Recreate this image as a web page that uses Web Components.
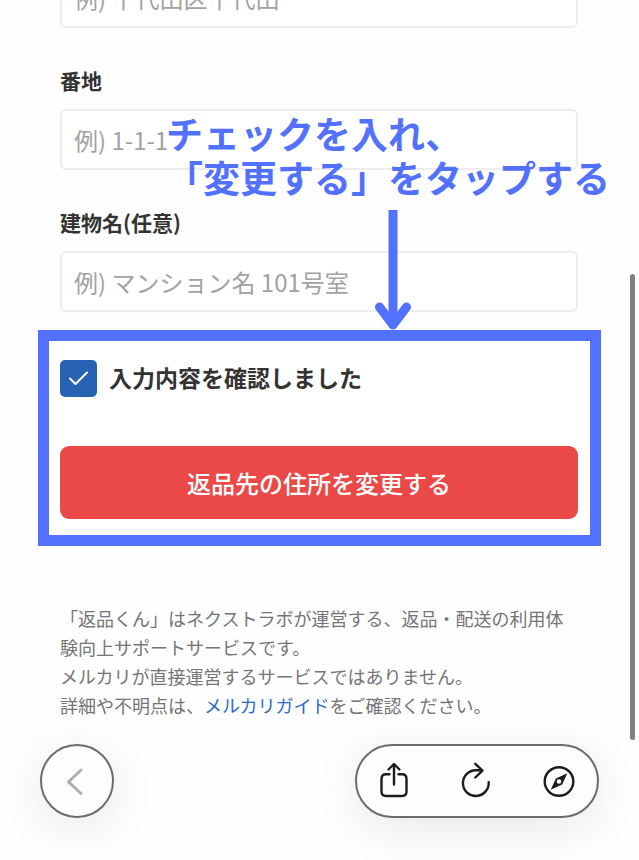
<!DOCTYPE html>
<html lang="ja">
<head>
<meta charset="utf-8">
<meta name="viewport" content="width=device-width, initial-scale=1">
<title>返品先の住所を変更</title>
<style>
  html, body { margin: 0; height: 100%; overflow: hidden; }
  body {
    background: #fefefe;
    color: #333;
    font-family: "Noto Sans CJK JP", "Noto Sans", sans-serif;
  }
</style>
</head>
<body>
<address-page></address-page>

<script>
const define = (name, html, setup) => {
  const template = document.createElement('template');
  template.innerHTML = html;
  customElements.define(name, class extends HTMLElement {
    constructor() {
      super();
      this.attachShadow({ mode: 'open' }).append(template.content.cloneNode(true));
    }
    connectedCallback() { if (setup) setup(this, this.shadowRoot); }
  });
};

define('form-field', `
  <style>
    :host { display: flex; flex-direction: column; gap: 15px; }
    label { font-size: 21px; line-height: 28px; font-weight: 700; }
    input {
      box-sizing: border-box; width: 100%; height: 61px; margin: 0; padding: 0 12px;
      border: 2px solid #ededed; border-radius: 6px; background: #fff; outline: none;
      font: inherit; font-size: 24px; color: #333;
    }
    input::placeholder { color: #a2a2a2; opacity: 1; }
  </style>
  <label for="field"><slot></slot></label>
  <input id="field" type="text">`,
  (host, root) => { root.querySelector('input').placeholder = host.getAttribute('placeholder'); });

define('confirm-check', `
  <style>
    :host { display: block; }
    label { display: flex; align-items: flex-start; gap: 12px; font-size: 23px; line-height: 34px; font-weight: 700; }
    .box { display: grid; flex: none; }
    .box > * { grid-area: 1 / 1; }
    input { appearance: none; width: 37px; height: 37px; margin: 0; border: 2px solid #ccc; border-radius: 5px; background: #fff; }
    input:checked { border-color: #2862b3; background: #2862b3; }
    svg { width: 37px; height: 37px; pointer-events: none; visibility: hidden; }
    input:checked + svg { visibility: visible; }
  </style>
  <label for="check">
    <span class="box">
      <input id="check" type="checkbox" checked>
      <svg viewBox="0 0 37 37" fill="none" stroke="#fff" stroke-width="2" stroke-linecap="round" stroke-linejoin="round" aria-hidden="true">
        <path d="M10 18.5 15.5 24 27 12.5"/>
      </svg>
    </span>
    <slot></slot>
  </label>`);

define('primary-button', `
  <style>
    :host { display: block; }
    button {
      display: block; width: 100%; height: 73px; margin: 0; padding: 0;
      border: 0; border-radius: 9px; background: #eb4948; color: #fff;
      font: inherit; font-size: 24px; font-weight: 500;
    }
  </style>
  <button type="button"><slot></slot></button>`);

define('highlight-frame', `
  <style>
    :host {
      display: flex; flex-direction: column; gap: 49px;
      border: 11px solid #5271ff; padding: 19px 12px 16px 11px; background: #fff;
    }
  </style>
  <slot></slot>`);

define('service-note', `
  <style>
    :host { display: block; position: relative; z-index: 1; font-size: 18px; line-height: 29px; color: #757575; }
    p { margin: 0; }
    a { color: #2d6cc4; text-decoration: none; }
  </style>
  <p>「返品くん」はネクストラボが運営する、返品・配送の利用体験向上サポートサービスです。</p>
  <p>メルカリが直接運営するサービスではありません。</p>
  <p>詳細や不明点は、<a href="#guide">メルカリガイド</a>をご確認ください。</p>`);

define('browser-bar', `
  <style>
    :host { display: flex; justify-content: space-between; }
    nav {
      box-sizing: border-box; display: flex; align-items: center; height: 74px;
      border: 2px solid #6c6c6c; border-radius: 37px; background: #fdfdfd;
      box-shadow: 0 10px 50px rgba(0, 0, 0, .09);
    }
    .back { width: 74px; justify-content: center; }
    .tools { width: 244px; justify-content: space-between; padding: 0 18px 0 17px; }
    button { display: grid; place-items: center; width: 40px; height: 40px; margin: 0; padding: 0; border: 0; background: none; color: #1c1c1c; }
    svg { width: 40px; height: 40px; fill: none; stroke: currentColor; stroke-width: 2.4; stroke-linecap: round; stroke-linejoin: round; }
    .back button { color: #b0b0b0; }
    .back svg { stroke-width: 3; }
  </style>
  <nav class="back" aria-label="履歴">
    <button type="button" aria-label="戻る"><svg viewBox="0 0 40 40"><path d="M24 9 11.500 20.800 24 32.500"/></svg></button>
  </nav>
  <nav class="tools" aria-label="ツール">
    <button type="button" aria-label="共有"><svg viewBox="0 0 40 40"><path d="M15.500 13.200H12Q7.500 13.200 7.500 17.700V30.500Q7.500 35 12 35H28Q32.500 35 32.500 30.500V17.700Q32.500 13.200 28 13.200H24.500M20 23.500V3.500M14.500 8.500 20 3 25.500 8.500"/></svg></button>
    <button type="button" aria-label="再読み込み"><svg viewBox="0 0 40 40"><path d="M31.700 21.200A12.900 12.900 0 1 1 18.800 9.200H25M18.300 2.800 25.500 9.600 18.300 16.500"/></svg></button>
    <button type="button" aria-label="ブラウザで開く"><svg viewBox="0 0 40 40"><circle cx="20" cy="20.500" r="14.300"/><path fill="currentColor" stroke="none" fill-rule="evenodd" d="M28.300 12.200 23.200 23.500 11.700 28.800 16.900 17.500ZM20 18.200A2.300 2.300 0 1 0 20 22.800A2.300 2.300 0 1 0 20 18.200Z"/></svg></button>
  </nav>`);

/* Instruction text and arrow laid over the form */
define('callout-note', `
  <style>
    :host { display: block; color: #5271ff; pointer-events: none; }
    p { margin: 0; font-size: 37px; line-height: 44px; font-weight: 700; white-space: nowrap; }
    svg { display: block; width: 40px; height: 120px; margin: 11px 0 0 207px; }
  </style>
  <p>チェックを入れ、<br>「変更する」をタップする</p>
  <svg viewBox="0 0 40 120" fill="none" stroke="currentColor" stroke-width="9" stroke-linejoin="round" aria-hidden="true">
    <path d="M20 0V114"/><path stroke-linecap="round" d="M6.500 97 20 115 33.500 97"/>
  </svg>`);

define('address-page', `
  <style>
    :host { display: block; position: relative; min-height: 100%; }
    main { display: flow-root; padding: 0 61px 0 60px; }
    .fields { display: flex; flex-direction: column; gap: 38px; margin-top: -76px; }
    highlight-frame { margin: 18px -23px 0 -22px; }
    service-note { margin-top: 58px; }
    browser-bar { margin: 24px -21px 0 -20px; }
    callout-note { position: absolute; left: 166px; top: 111px; z-index: 2; }
    .scroll { position: absolute; right: 4px; top: 274px; width: 5px; height: 466px; border-radius: 3px; background: #808080; z-index: 2; }
  </style>
  <main>
    <div class="fields">
      <form-field placeholder="例) 千代田区千代田">町名</form-field>
      <form-field placeholder="例) 1-1-1">番地</form-field>
      <form-field placeholder="例) マンション名 101号室">建物名(任意)</form-field>
    </div>
    <highlight-frame>
      <confirm-check>入力内容を確認しました</confirm-check>
      <primary-button>返品先の住所を変更する</primary-button>
    </highlight-frame>
    <service-note></service-note>
    <browser-bar></browser-bar>
  </main>
  <callout-note></callout-note>
  <div class="scroll"></div>`);
</script>
</body>
</html>
